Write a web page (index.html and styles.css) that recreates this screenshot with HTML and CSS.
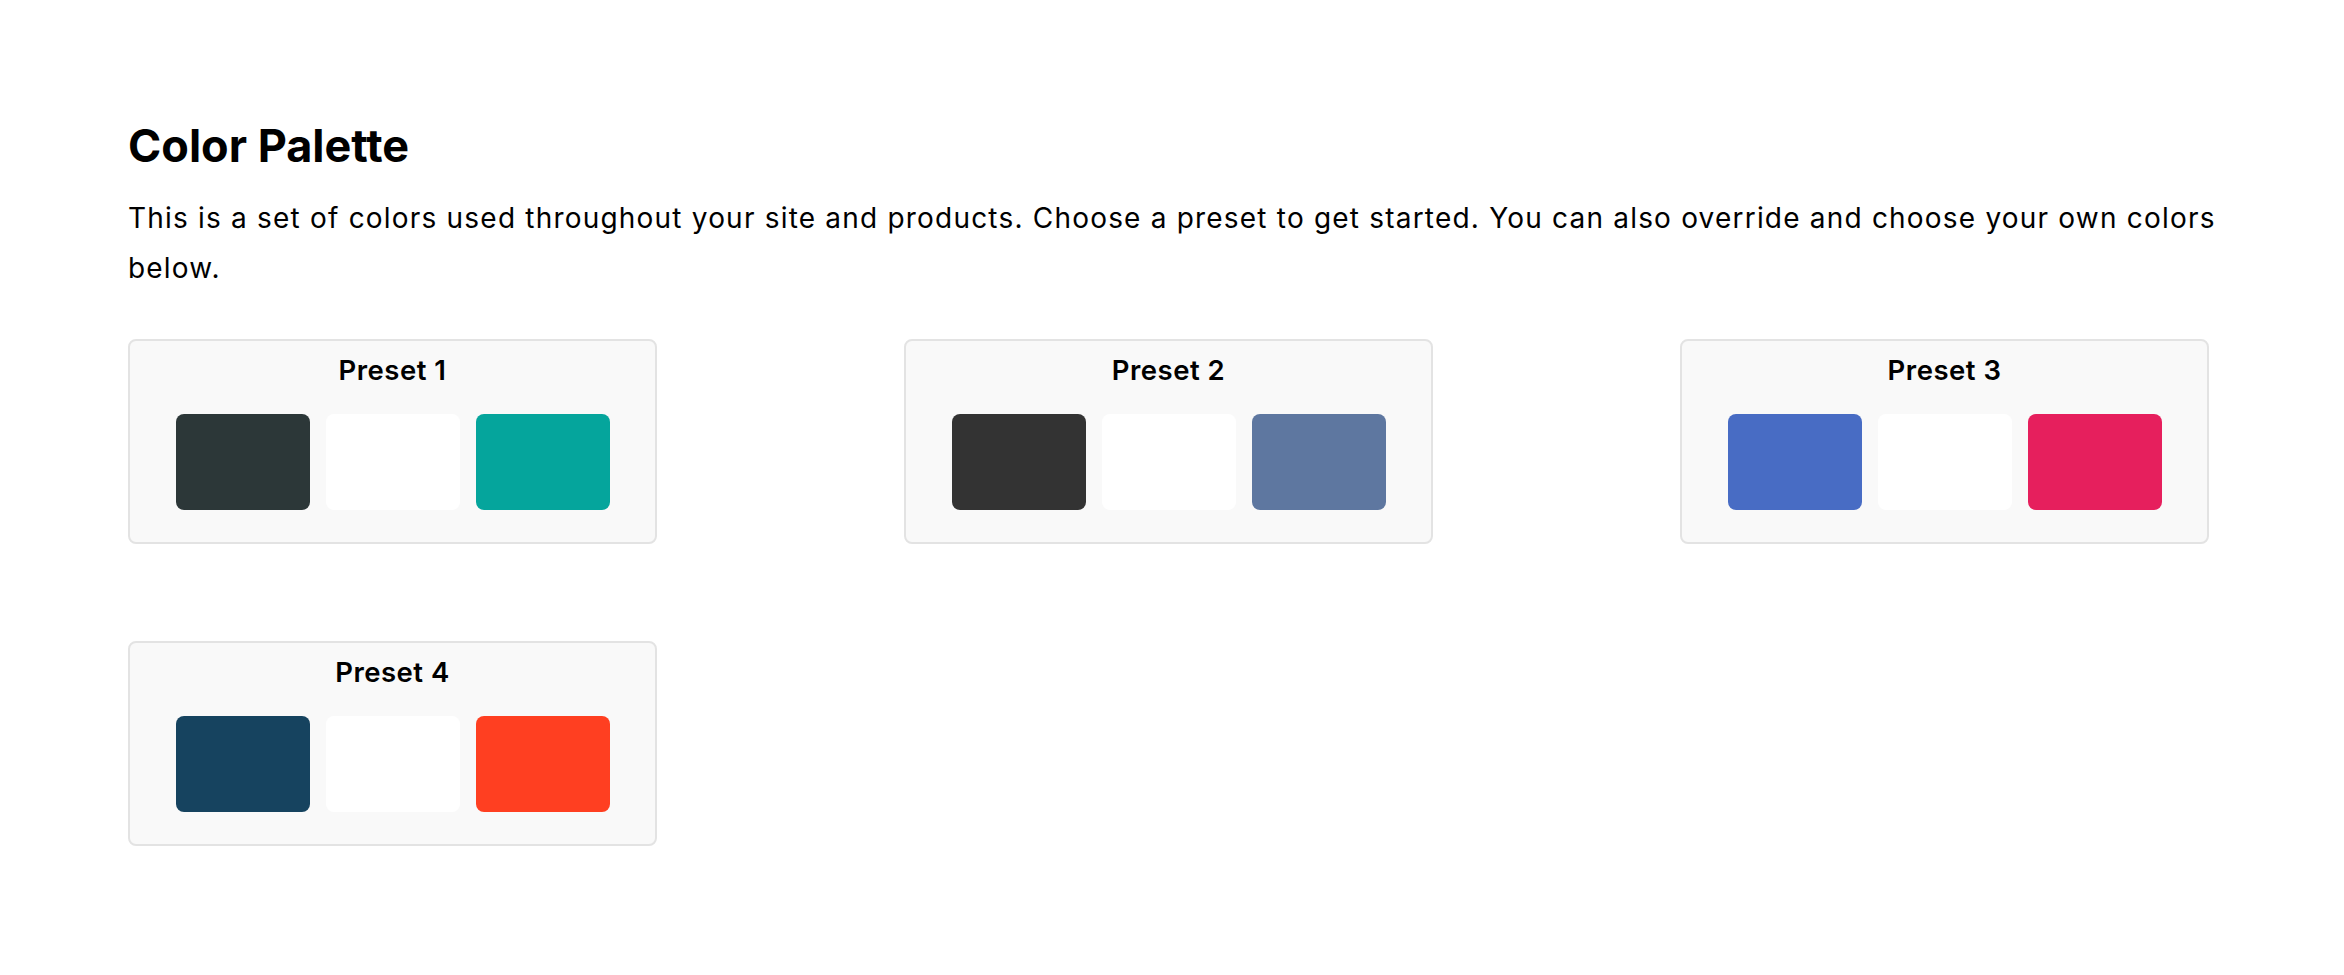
FILE: index.html
```html
<!DOCTYPE html>
<html lang="en">
<head>
<meta charset="utf-8">
<title>Color Palette</title>
<link rel="stylesheet" href="styles.css">
</head>
<body>
<main class="page">
  <h1 class="title">Color Palette</h1>
  <p class="intro">This is a set of colors used throughout your site and products. Choose a preset to get started. You can also override and choose your own colors below.</p>
  <div class="presets">
    <section class="preset">
      <h2 class="preset-name">Preset 1</h2>
      <div class="swatches">
        <span class="swatch c-slate"></span>
        <span class="swatch c-white"></span>
        <span class="swatch c-teal"></span>
      </div>
    </section>
    <section class="preset">
      <h2 class="preset-name">Preset 2</h2>
      <div class="swatches">
        <span class="swatch c-charcoal"></span>
        <span class="swatch c-white"></span>
        <span class="swatch c-steel"></span>
      </div>
    </section>
    <section class="preset">
      <h2 class="preset-name">Preset 3</h2>
      <div class="swatches">
        <span class="swatch c-blue"></span>
        <span class="swatch c-white"></span>
        <span class="swatch c-pink"></span>
      </div>
    </section>
    <section class="preset">
      <h2 class="preset-name">Preset 4</h2>
      <div class="swatches">
        <span class="swatch c-navy"></span>
        <span class="swatch c-white"></span>
        <span class="swatch c-orange"></span>
      </div>
    </section>
  </div>
</main>
</body>
</html>
```
FILE: styles.css
```css
html, body {
  margin: 0;
  padding: 0;
  background: #ffffff;
}

body {
  font-family: Inter, "Noto Sans", "Liberation Sans", sans-serif;
  color: #000000;
}

.page {
  padding: 118px 120px 0 128px;
}

.title {
  margin: 0;
  font-size: 45px;
  line-height: 56px;
  font-weight: 700;
}

.intro {
  margin: 19px 0 0 0;
  font-size: 28px;
  line-height: 50px;
  font-weight: 400;
  letter-spacing: 1.2px;
}

.presets {
  margin-top: 46px;
  display: grid;
  grid-template-columns: repeat(3, 529px);
  column-gap: 247px;
  row-gap: 97px;
}

.preset {
  box-sizing: border-box;
  width: 529px;
  background: #f9f9f9;
  border: 2px solid #e3e3e3;
  border-radius: 8px;
  padding: 12px 0 32px 0;
}

.preset-name {
  margin: 0 0 27px 0;
  text-align: center;
  font-size: 27.5px;
  line-height: 34px;
  font-weight: 600;
  letter-spacing: 0.5px;
}

.swatches {
  display: flex;
  justify-content: center;
  gap: 16px;
}

.swatch {
  display: block;
  width: 134px;
  height: 96px;
  border-radius: 8px;
}

.c-white { background: #ffffff; }
.c-slate { background: #2c3738; }
.c-teal { background: #05a59c; }
.c-charcoal { background: #333333; }
.c-steel { background: #5e77a0; }
.c-blue { background: #486cc4; }
.c-pink { background: #e61f5d; }
.c-navy { background: #16435f; }
.c-orange { background: #ff3f21; }
```
